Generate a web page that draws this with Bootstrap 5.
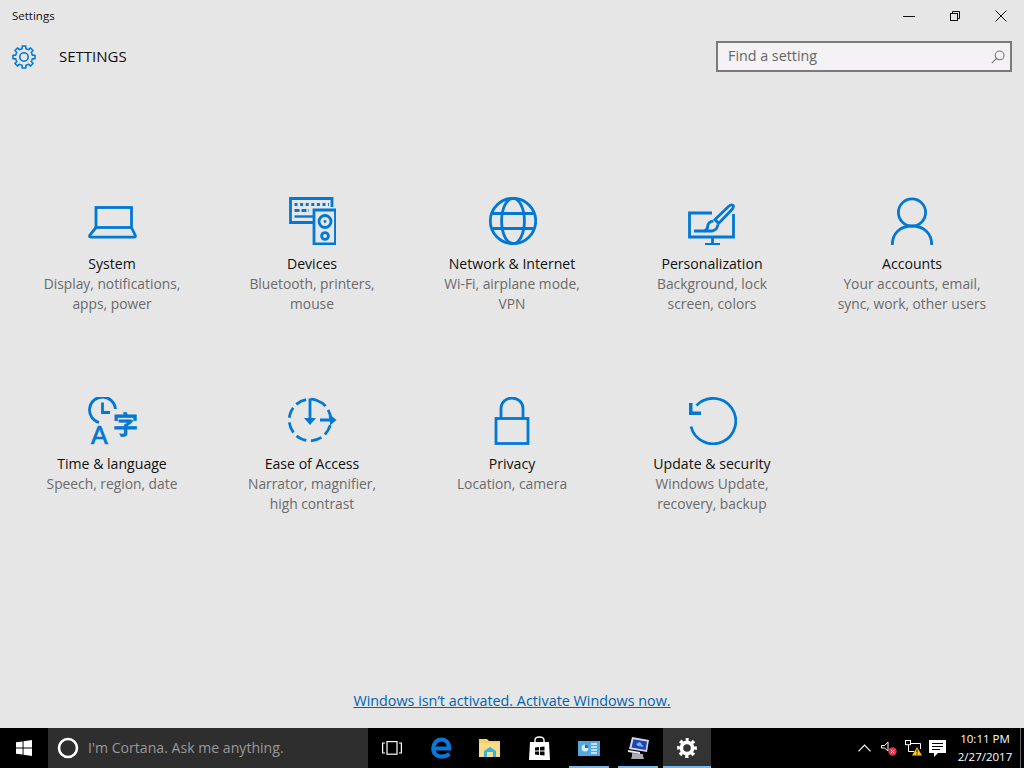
<!DOCTYPE html>
<html lang="en">
<head>
<meta charset="utf-8">
<title>Settings</title>
<link href="https://cdn.jsdelivr.net/npm/bootstrap@5.3.0/dist/css/bootstrap.min.css" rel="stylesheet">
<style>
html,body{height:768px;overflow:hidden}
body{background:#e6e6e6;font-family:"Open Sans","Noto Sans",sans-serif;color:#111}
svg{display:block;flex:none}
.stroke-ic{fill:none;stroke:#0078d4;stroke-width:2.8}
.win-page{height:768px}
.title-row{height:32px;padding-left:12px;font-size:11.5px}
.win-btn{width:46px;height:32px}
.head-row{height:49px;padding:0 12px}
.head-title{font-size:15px;margin-left:23px;font-weight:500}
.find-box{width:296px;height:31px;border:2px solid #7a7a7a;background:#f4f2f4;padding:0 5px 0 10px}
.find-input{border:0;background:transparent;outline:0;font-size:14.3px;color:#555;padding:0 0 2px;width:240px;font-family:inherit}
.find-input::placeholder{color:#666;opacity:1}
.tile-grid{display:grid;grid-template-columns:repeat(5,200px);grid-auto-rows:200px;padding:116px 0 0 12px}
.tile-icon{height:48px}
.tile-icon-tall{height:56px;margin-bottom:-8px}
.tile-name{font-size:14.1px;line-height:20px;margin-top:9px;color:#111}
.tile-desc{font-size:13.8px;line-height:20px;color:#6a6a6a;width:153px}
.activate{font-size:14.35px;line-height:20px;color:#0063b1;margin-bottom:17px}
.activate:hover{color:#0063b1}
.task-bar{height:40px;background:#000;color:#fff}
.start-btn{width:48px;height:40px}
.cortana{width:320px;height:40px;background:#2e2e2e;padding-left:9px;font-size:14.1px;color:#999}
.cortana svg{margin-right:9px}
.task-item{width:48px;height:40px;margin-right:1px}
.task-run{box-shadow:inset 0 -2px 0 #76b9ed;width:40px;margin:0 4px 0 5px}
.task-on{background:#333;box-shadow:inset 0 -2px 0 #76b9ed;margin:0 0 0 1px;width:48px}
.tray-item{height:40px;width:24.5px}
.clock-box{width:70px;font-size:11.5px;line-height:18px;color:#fff}
.show-desk{width:4px;height:40px;border-left:1px solid #666}
</style>
</head>
<body>
<div class="win-page d-flex flex-column">
  <div class="title-row d-flex align-items-center justify-content-between">
    <span>Settings</span>
    <div class="d-flex">
      <div class="win-btn d-flex align-items-center justify-content-center"><svg width="12" height="12" viewBox="0 0 12 12"><path d="M0 6.5H12" stroke="#111"/></svg></div>
      <div class="win-btn d-flex align-items-center justify-content-center"><svg width="12" height="12" viewBox="0 0 12 12" fill="none" stroke="#111"><rect x="1.5" y="3.5" width="7" height="7"/><path d="M3.5 3.5V1.5H10.5V8.5H8.5"/></svg></div>
      <div class="win-btn d-flex align-items-center justify-content-center"><svg width="12" height="12" viewBox="0 0 12 12"><path d="M.5 .5L11.5 11.5M11.5 .5L.5 11.5" stroke="#111"/></svg></div>
    </div>
  </div>
  <div class="head-row d-flex align-items-center justify-content-between">
    <div class="d-flex align-items-center">
      <svg width="24" height="24" viewBox="0 0 24 24" fill="none" stroke="#0078d4" stroke-width="1.6" stroke-linejoin="round">
        <defs><path id="gearseg" d="M8.75 4.15L10.09 3.72L10.2 1H13.8L13.91 3.72L15.25 4.15"/></defs>
        <use href="#gearseg"/><use href="#gearseg" transform="rotate(45 12 12)"/><use href="#gearseg" transform="rotate(90 12 12)"/><use href="#gearseg" transform="rotate(135 12 12)"/><use href="#gearseg" transform="rotate(180 12 12)"/><use href="#gearseg" transform="rotate(225 12 12)"/><use href="#gearseg" transform="rotate(270 12 12)"/><use href="#gearseg" transform="rotate(315 12 12)"/>
        <circle cx="12" cy="12" r="4.2"/>
      </svg>
      <span class="head-title">SETTINGS</span>
    </div>
    <div class="find-box d-flex align-items-center justify-content-between">
      <input class="find-input" type="text" placeholder="Find a setting" aria-label="Find a setting">
      <svg width="14" height="14" viewBox="0 0 14 14" fill="none" stroke="#777" stroke-width="1.1"><circle cx="8.6" cy="5.4" r="4.4"/><path d="M5.4 8.6L.8 13.2"/></svg>
    </div>
  </div>

  <div class="tile-grid flex-grow-1">
    <div class="d-flex flex-column align-items-center text-center">
      <svg class="tile-icon stroke-ic" width="50" height="48" viewBox="-1 0 50 48"><rect x="8" y="10.5" width="35.5" height="20"/><path d="M8 30.5L1.8 38.2Q1 40.2 3.2 40.2H45.8Q48 40.2 47.2 38.2L43.5 30.5"/></svg>
      <div class="tile-name">System</div>
      <div class="tile-desc">Display, notifications, apps, power</div>
    </div>
    <div class="d-flex flex-column align-items-center text-center">
      <svg class="tile-icon stroke-ic" width="48" height="48" viewBox="-1 0 48 48">
        <path d="M43 10V1.5H1.5V25.5H24"/>
        <path stroke-width="3" stroke-dasharray="3 2.6" d="M5.5 7.5H40"/>
        <path stroke-width="3" stroke-dasharray="5 2" d="M5.5 13.5H20"/>
        <path stroke-width="2.4" d="M5.5 19.5H24"/>
        <path d="M25 13H46.5V47H25Z"/>
        <circle cx="36" cy="24.5" r="6"/><circle cx="36" cy="24.5" r="1.4" fill="#0078d4" stroke="none"/>
        <circle cx="36" cy="39" r="3.4"/>
      </svg>
      <div class="tile-name">Devices</div>
      <div class="tile-desc">Bluetooth, printers, mouse</div>
    </div>
    <div class="d-flex flex-column align-items-center text-center">
      <svg class="tile-icon stroke-ic" width="50" height="48" viewBox="-1 0 50 48"><circle cx="25" cy="24" r="22.7"/><ellipse cx="25" cy="24" rx="11.4" ry="22.7"/><path d="M4.5 16.5H45.5M4.5 31.5H45.5"/></svg>
      <div class="tile-name">Network &amp; Internet</div>
      <div class="tile-desc">Wi-Fi, airplane mode, VPN</div>
    </div>
    <div class="d-flex flex-column align-items-center text-center">
      <svg class="tile-icon stroke-ic" width="48" height="48" viewBox="0 0 48 48">
        <path d="M24 16H1.5V40H45.5V17"/>
        <path d="M17 47.5H32M24.5 40V47.5M6 34H17"/>
        <path d="M40.5 9.5L27 22.5L30.5 26.5L44 12.5Q46.3 9 45 8.3Q43.4 7 40.5 9.5Z"/>
        <path d="M25.5 24.2Q20 24.5 19.6 30Q19.2 33 16.5 34H24Q29.5 33 29.8 27.5"/>
      </svg>
      <div class="tile-name">Personalization</div>
      <div class="tile-desc">Background, lock screen, colors</div>
    </div>
    <div class="d-flex flex-column align-items-center text-center">
      <svg class="tile-icon stroke-ic" width="48" height="48" viewBox="0 0 48 48"><circle cx="24" cy="15.5" r="13.6"/><path d="M4.3 48C4.3 36 12.5 29 24 29C35.5 29 43.7 36 43.7 48"/></svg>
      <div class="tile-name">Accounts</div>
      <div class="tile-desc">Your accounts, email, sync, work, other users</div>
    </div>

    <div class="d-flex flex-column align-items-center text-center">
      <svg class="tile-icon-tall stroke-ic" width="50" height="56" viewBox="0 0 50 56">
        <path d="M12 25.5A13 13 0 1 1 28.5 12"/>
        <path d="M15.5 5.5V15.5H23"/>
        <text x="4" y="47" font-family="'Liberation Sans',sans-serif" font-size="25" fill="#0078d4" stroke="#0078d4" stroke-width=".7">A</text>
        <text x="26" y="37" font-family="'Noto Sans CJK SC',sans-serif" font-size="25" font-weight="500" fill="#0078d4" stroke="#0078d4" stroke-width=".8">字</text>
      </svg>
      <div class="tile-name">Time &amp; language</div>
      <div class="tile-desc">Speech, region, date</div>
    </div>
    <div class="d-flex flex-column align-items-center text-center">
      <svg class="tile-icon stroke-ic" width="50" height="48" viewBox="0 0 50 48">
        <circle cx="23" cy="23" r="20.8" stroke-dasharray="11 4.5" transform="rotate(-72 23 23)"/>
        <path d="M23 1.5V23M33 23H46"/>
        <path d="M17 21H29L23 28Z" fill="#0078d4" stroke="none"/>
        <path d="M43 17.5V28.5L49.5 23Z" fill="#0078d4" stroke="none"/>
      </svg>
      <div class="tile-name">Ease of Access</div>
      <div class="tile-desc">Narrator, magnifier, high contrast</div>
    </div>
    <div class="d-flex flex-column align-items-center text-center">
      <svg class="tile-icon stroke-ic" width="36" height="48" viewBox="0 0 36 48"><rect x="2" y="21.5" width="32" height="25"/><path d="M7 21.5V11.5A11 10.5 0 0 1 29 11.5V21.5"/></svg>
      <div class="tile-name">Privacy</div>
      <div class="tile-desc">Location, camera</div>
    </div>
    <div class="d-flex flex-column align-items-center text-center">
      <svg class="tile-icon stroke-ic" width="50" height="48" viewBox="-2 0 50 48">
        <path d="M2 29.5A22.7 22.7 0 1 0 7.5 8.5"/>
        <path d="M0 6H3.5V14.5H12V18H0Z" fill="#0078d4" stroke="none"/>
      </svg>
      <div class="tile-name">Update &amp; security</div>
      <div class="tile-desc">Windows Update, recovery, backup</div>
    </div>
  </div>

  <div class="text-center"><a class="activate d-inline-block" href="#">Windows isn’t activated. Activate Windows now.</a></div>

  <div class="task-bar d-flex align-items-center">
    <div class="start-btn d-flex align-items-center justify-content-center">
      <svg width="16" height="16" viewBox="0 0 17 17" fill="#fff"><path d="M0 2.5L7 1.5V8H0ZM8 1.3L17 0V8H8ZM0 9H7V15.5L0 14.5ZM8 9H17V17L8 15.7Z"/></svg>
    </div>
    <div class="cortana d-flex align-items-center">
      <svg width="22" height="22" viewBox="0 0 22 22" fill="none" stroke="#fff" stroke-width="2.6"><circle cx="11" cy="11" r="9"/></svg>
      <span>I'm Cortana. Ask me anything.</span>
    </div>
    <div class="task-item d-flex align-items-center justify-content-center">
      <svg width="20" height="14" viewBox="0 0 20 14" fill="none" stroke="#fff" stroke-width="1.2"><rect x="5" y=".6" width="10" height="12.6"/><path d="M3 2H.6V12H3M17 2H19.4V12H17"/></svg>
    </div>
    <div class="task-item d-flex align-items-center justify-content-center">
      <svg width="21" height="22" viewBox="0 0 21 22" fill="none" stroke="#0a78d8" stroke-width="4.2"><path d="M3 11.5H18.2C18.2 6 15 2.5 10.5 2.5C5.5 2.5 2.3 6.5 2.3 11.5C2.3 16.5 6 19.6 10.5 19.6C13.5 19.6 16 18.8 18.5 17"/></svg>
    </div>
    <div class="task-item d-flex align-items-center justify-content-center">
      <svg width="22" height="20" viewBox="0 0 22 20"><path d="M0 1H8L10 3H21V19H0Z" fill="#f2cf6c"/><path d="M0 5H21V19H0Z" fill="#f8dc88"/><path d="M5 19V13L11 9L17 13V19H14V14H8V19Z" fill="#35b3e0"/></svg>
    </div>
    <div class="task-item d-flex align-items-center justify-content-center">
      <svg width="21" height="24" viewBox="0 0 21 24"><path d="M1 6H20L21 24H0Z" fill="#fff"/><path d="M6 8V4Q6 1 10.5 1Q15 1 15 4V8" fill="none" stroke="#fff" stroke-width="1.4"/><path d="M6 11.5L10 11V14.5H6ZM11 11L15.5 10.4V14.5H11ZM6 15.5H10V19L6 18.5ZM11 15.5H15.5V19.6L11 19Z" fill="#000"/></svg>
    </div>
    <div class="task-item task-run d-flex align-items-center justify-content-center">
      <svg width="22" height="15" viewBox="0 0 22 15"><rect width="22" height="15" fill="#52a8e0"/><circle cx="7" cy="7" r="3.4" fill="#d7eefb"/><path d="M7 7V3.6A3.4 3.4 0 0 1 10.4 7Z" fill="#1e6fb8"/><path d="M13 3H19M13 6H19M13 9H19M13 12H19" stroke="#e8f5fd" stroke-width="1.3"/></svg>
    </div>
    <div class="task-item task-run d-flex align-items-center justify-content-center">
      <svg width="24" height="24" viewBox="0 0 24 24"><path d="M6 1L23 4L21 16L3 13Z" fill="#d5d8df"/><path d="M7.5 3.2L21 5.5L19.7 14L5.5 11.6Z" fill="#1d43b8"/><path d="M10 8L14 6L18 11L12 10Z" fill="#7fb2ea"/><path d="M6 17L17 18V20L18 23H5L6 20Z" fill="#a9acb3"/><path d="M2 14L14 16V18L2 16Z" fill="#e9e9ee"/></svg>
    </div>
    <div class="task-item task-on d-flex align-items-center justify-content-center">
      <svg width="20" height="20" viewBox="0 0 20 20" fill="none" stroke="#fff"><circle cx="10" cy="10" r="5.6" stroke-width="3.6"/><circle cx="10" cy="10" r="8" stroke-width="3.8" stroke-dasharray="3.2 3.083" stroke-dashoffset="1.6" transform="rotate(-90 10 10)"/></svg>
    </div>
    <div class="d-flex align-items-center ms-auto">
      <div class="tray-item d-flex align-items-center justify-content-center"><svg width="13" height="8" viewBox="0 0 13 8" fill="none" stroke="#fff" stroke-width="1.1"><path d="M.5 7.3L6.5 1L12.5 7.3"/></svg></div>
      <div class="tray-item d-flex align-items-center justify-content-center"><svg width="16" height="15" viewBox="0 0 16 15"><path d="M.5 4.5H3.5L7 1V10L3.5 7H.5Z" fill="none" stroke="#fff"/><circle cx="11.5" cy="10.5" r="4.2" fill="#d8394a"/><path d="M9.8 8.8L13.2 12.2M13.2 8.8L9.8 12.2" stroke="#fff" stroke-width=".9"/></svg></div>
      <div class="tray-item d-flex align-items-center justify-content-center"><svg width="17" height="16" viewBox="0 0 17 16"><path d="M3.5 5V11.5H9M3.5 3.5H15.5V9" fill="none" stroke="#fff"/><rect x=".5" y=".5" width="5" height="4.2" fill="#000" stroke="#fff"/><path d="M12 7L17 15.5H7Z" fill="#f5c518"/><path d="M12 9.5V12.5M12 13.5V14.6" stroke="#000"/></svg></div>
      <div class="tray-item d-flex align-items-center justify-content-center"><svg width="17" height="17" viewBox="0 0 17 17"><path d="M0 0H17V13H9L5 17V13H0Z" fill="#fff"/><path d="M3 3.5H14M3 6.5H14M3 9.5H11" stroke="#000"/></svg></div>
      <div class="clock-box text-center"><div>10:11 PM</div><div>2/27/2017</div></div>
      <div class="show-desk"></div>
    </div>
  </div>
</div>
</body>
</html>
